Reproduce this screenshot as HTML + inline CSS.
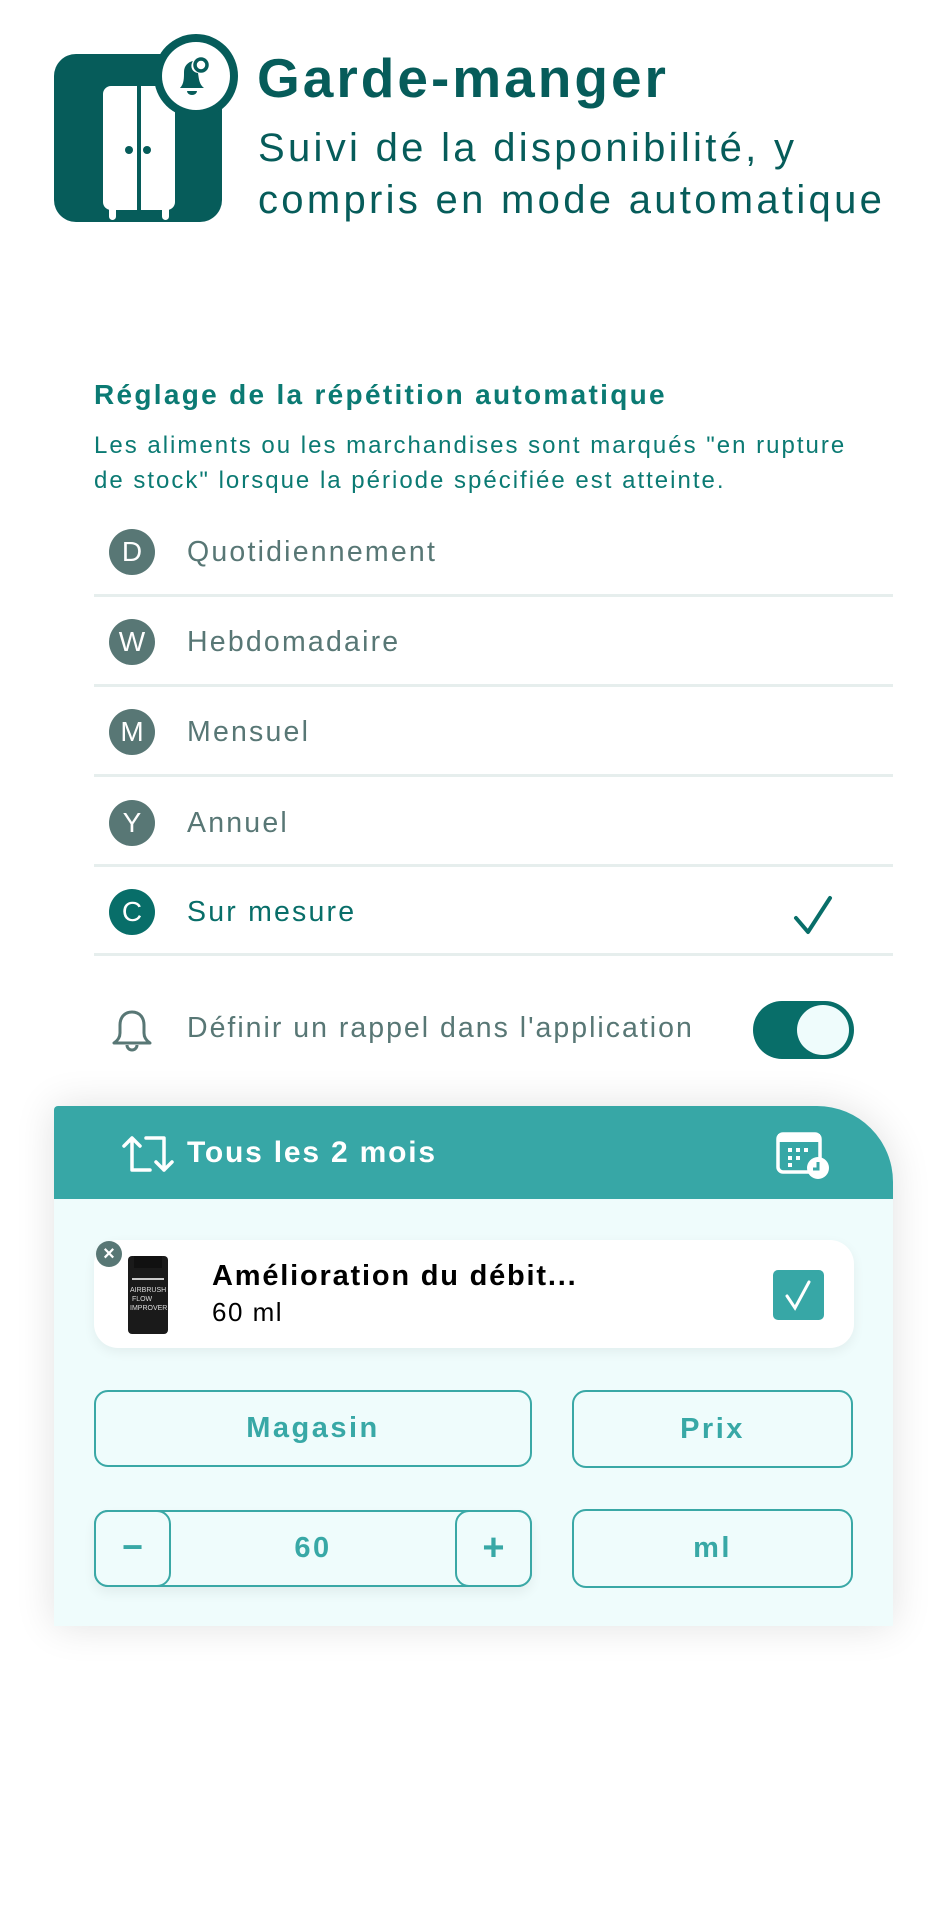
<!DOCTYPE html>
<html><head><meta charset="utf-8"><style>
*{margin:0;padding:0;box-sizing:border-box}
body{width:948px;height:1923px;background:#fff;font-family:"Liberation Sans",sans-serif;position:relative;overflow:hidden}
.a{position:absolute}
.t{white-space:nowrap}
.row{position:absolute;left:94px;width:799px;height:90px}
.circ{position:absolute;left:15px;width:46px;height:46px;border-radius:50%;background:#587775;color:#fff;font-size:28px;text-align:center;line-height:46px}
.lbl{position:absolute;left:93px;font-size:28.5px;color:#587775;line-height:46px;letter-spacing:2.2px;white-space:nowrap}
.div{position:absolute;left:94px;width:799px;height:3px;background:#e6eeed}
.btn{position:absolute;border:2px solid #3aa8a6;border-radius:14px;background:#effcfc;color:#38a8a6;font-size:29px;font-weight:bold;text-align:center;letter-spacing:2.5px}
</style></head><body>
<!-- header icon -->
<div class="a" style="left:54px;top:54px;width:168px;height:168px;background:#065c5a;border-radius:22px"></div>
<svg class="a" style="left:54px;top:54px" width="168" height="168" viewBox="0 0 168 168">
<path d="M49 40 a8 8 0 0 1 8 -8 h26 v124 h-26 a8 8 0 0 1 -8 -8 z" fill="#fff"/>
<path d="M87 32 h26 a8 8 0 0 1 8 8 v108 a8 8 0 0 1 -8 8 h-26 z" fill="#fff"/>
<circle cx="75" cy="96" r="4" fill="#065c5a"/><circle cx="93" cy="96" r="4" fill="#065c5a"/>
<rect x="55" y="152" width="7" height="14" rx="3.5" fill="#fff"/><rect x="108" y="152" width="7" height="14" rx="3.5" fill="#fff"/>
</svg>
<div class="a" style="left:154px;top:34px;width:84px;height:84px;border-radius:50%;background:#065c5a"></div>
<div class="a" style="left:162px;top:42px;width:68px;height:68px;border-radius:50%;background:#fff"></div>
<svg class="a" style="left:170px;top:52px" width="52" height="52" viewBox="0 0 52 52">
<path d="M10 36 c4-4 4-10 4-16 c0-6 4-10 9-11 c-3 4-2 11 5 12 c1 6 1 11 6 15 z" fill="#065c5a"/>
<circle cx="31" cy="13" r="6" fill="none" stroke="#065c5a" stroke-width="3.5"/>
<path d="M17 39 h10 a5 4 0 0 1 -10 0z" fill="#065c5a"/>
</svg>
<div class="a t" style="left:257px;top:46px;font-size:55px;font-weight:bold;color:#065c5a;letter-spacing:3px">Garde-manger</div>
<div class="a t" style="left:258px;top:122px;font-size:40px;color:#065c5a;line-height:52px;letter-spacing:3.3px">Suivi de la disponibilité, y<br>compris en mode automatique</div>

<div class="a t" style="left:94px;top:379px;font-size:28px;font-weight:bold;color:#0b7a73;letter-spacing:2.3px">Réglage de la répétition automatique</div>
<div class="a t" style="left:94px;top:428px;font-size:24px;color:#0b7a73;line-height:35px;letter-spacing:2px">Les aliments ou les marchandises sont marqués "en rupture<br>de stock" lorsque la période spécifiée est atteinte.</div>

<div class="row" style="top:529px"><div class="circ">D</div><div class="lbl">Quotidiennement</div></div>
<div class="div" style="top:594px"></div>
<div class="row" style="top:619px"><div class="circ">W</div><div class="lbl">Hebdomadaire</div></div>
<div class="div" style="top:684px"></div>
<div class="row" style="top:709px"><div class="circ">M</div><div class="lbl">Mensuel</div></div>
<div class="div" style="top:774px"></div>
<div class="row" style="top:800px"><div class="circ">Y</div><div class="lbl">Annuel</div></div>
<div class="div" style="top:864px"></div>
<div class="row" style="top:889px"><div class="circ" style="background:#086e69">C</div><div class="lbl" style="color:#086e69">Sur mesure</div></div>
<svg class="a" style="left:792px;top:894px" width="44" height="44" viewBox="0 0 44 44"><path d="M4 24 L16 38 L38 4" fill="none" stroke="#086e69" stroke-width="4" stroke-linecap="round" stroke-linejoin="round"/></svg>
<div class="div" style="top:953px"></div>

<svg class="a" style="left:110px;top:1008px" width="44" height="46" viewBox="0 0 44 46"><path d="M22 4 c-8 0-12 6-12 13 v8 c0 5-3 8-6 10 h36 c-3-2-6-5-6-10 v-8 c0-7-4-13-12-13z" fill="none" stroke="#587775" stroke-width="3" stroke-linejoin="round"/><path d="M17 37 a5 5 0 0 0 10 0" fill="none" stroke="#587775" stroke-width="3"/></svg>
<div class="a t" style="left:187px;top:1012px;font-size:28.5px;color:#587775;letter-spacing:2px">Définir un rappel dans l'application</div>
<div class="a" style="left:753px;top:1001px;width:101px;height:58px;border-radius:29px;background:#086e69"></div>
<div class="a" style="left:797px;top:1005px;width:52px;height:50px;border-radius:50%;background:#effcfc"></div>

<!-- card -->
<div class="a" style="left:54px;top:1106px;width:839px;height:520px;background:#effcfc;border-top-right-radius:76px;box-shadow:0 0 40px rgba(0,0,0,0.12)"></div>
<div class="a" style="left:54px;top:1106px;width:839px;height:93px;background:#37a7a6;border-top-right-radius:76px;border-top-left-radius:4px"></div>
<svg class="a" style="left:120px;top:1130px" width="56" height="48" viewBox="0 0 56 48"><path d="M12 40 V8 M4 16 L12 8 L20 16 M12 40 H30 M44 8 V40 M36 32 L44 40 L52 32 M44 8 H26" fill="none" stroke="#fff" stroke-width="3.5" stroke-linecap="round" stroke-linejoin="round"/></svg>
<div class="a t" style="left:187px;top:1136px;font-size:30px;font-weight:bold;color:#fff;letter-spacing:1.8px">Tous les 2 mois</div>
<svg class="a" style="left:776px;top:1132px" width="54" height="48" viewBox="0 0 54 48"><rect x="2" y="2" width="42" height="38" rx="5" fill="none" stroke="#fff" stroke-width="3.5"/><rect x="2" y="2" width="42" height="8" fill="#fff"/><g fill="#fff"><rect x="12" y="16" width="4" height="4"/><rect x="20" y="16" width="4" height="4"/><rect x="28" y="16" width="4" height="4"/><rect x="12" y="24" width="4" height="4"/><rect x="20" y="24" width="4" height="4"/><rect x="12" y="31" width="4" height="4"/></g><circle cx="42" cy="36" r="11" fill="#fff"/><path d="M42 30 v7 h-5" stroke="#37a7a6" stroke-width="3" fill="none"/></svg>

<div class="a" style="left:94px;top:1240px;width:760px;height:108px;background:#fff;border-radius:24px;box-shadow:0 4px 12px rgba(0,0,0,0.06)"></div>
<div class="a" style="left:128px;top:1256px;width:40px;height:78px;background:#1a1a1a;border-radius:4px"></div>
<div class="a" style="left:134px;top:1256px;width:28px;height:12px;background:#111"></div>
<div class="a" style="left:132px;top:1278px;width:32px;height:2px;background:#ccc"></div>
<div class="a t" style="left:130px;top:1286px;font-size:7px;color:#ddd;line-height:9px">AIRBRUSH<br>&nbsp;FLOW<br>IMPROVER</div>
<div class="a" style="left:96px;top:1241px;width:26px;height:26px;border-radius:50%;background:#587775;color:#fff;font-size:20px;text-align:center;line-height:26px;font-weight:bold">×</div>
<div class="a t" style="left:212px;top:1260px;font-size:29px;font-weight:bold;color:#000;letter-spacing:1.8px">Amélioration du débit...</div>
<div class="a t" style="left:212px;top:1297px;font-size:26px;color:#000;letter-spacing:1.5px">60 ml</div>
<div class="a" style="left:773px;top:1270px;width:51px;height:50px;background:#37a7a6;border-radius:5px"></div>
<svg class="a" style="left:773px;top:1270px" width="51" height="50" viewBox="0 0 51 50"><path d="M14 26 L22 38 L36 12" fill="none" stroke="#fff" stroke-width="3" stroke-linecap="round"/></svg>

<div class="btn" style="left:94px;top:1390px;width:438px;height:77px;line-height:73px">Magasin</div>
<div class="btn" style="left:572px;top:1390px;width:281px;height:78px;line-height:74px">Prix</div>
<div class="btn" style="left:94px;top:1510px;width:438px;height:77px;line-height:73px;box-shadow:0 6px 12px rgba(0,0,0,0.06)">60</div>
<div class="btn" style="left:94px;top:1510px;width:77px;height:77px;line-height:70px;font-size:36px;letter-spacing:0">−</div>
<div class="btn" style="left:455px;top:1510px;width:77px;height:77px;line-height:73px;font-size:38px;letter-spacing:0">+</div>
<div class="btn" style="left:572px;top:1509px;width:281px;height:79px;line-height:75px">ml</div>
</body></html>
